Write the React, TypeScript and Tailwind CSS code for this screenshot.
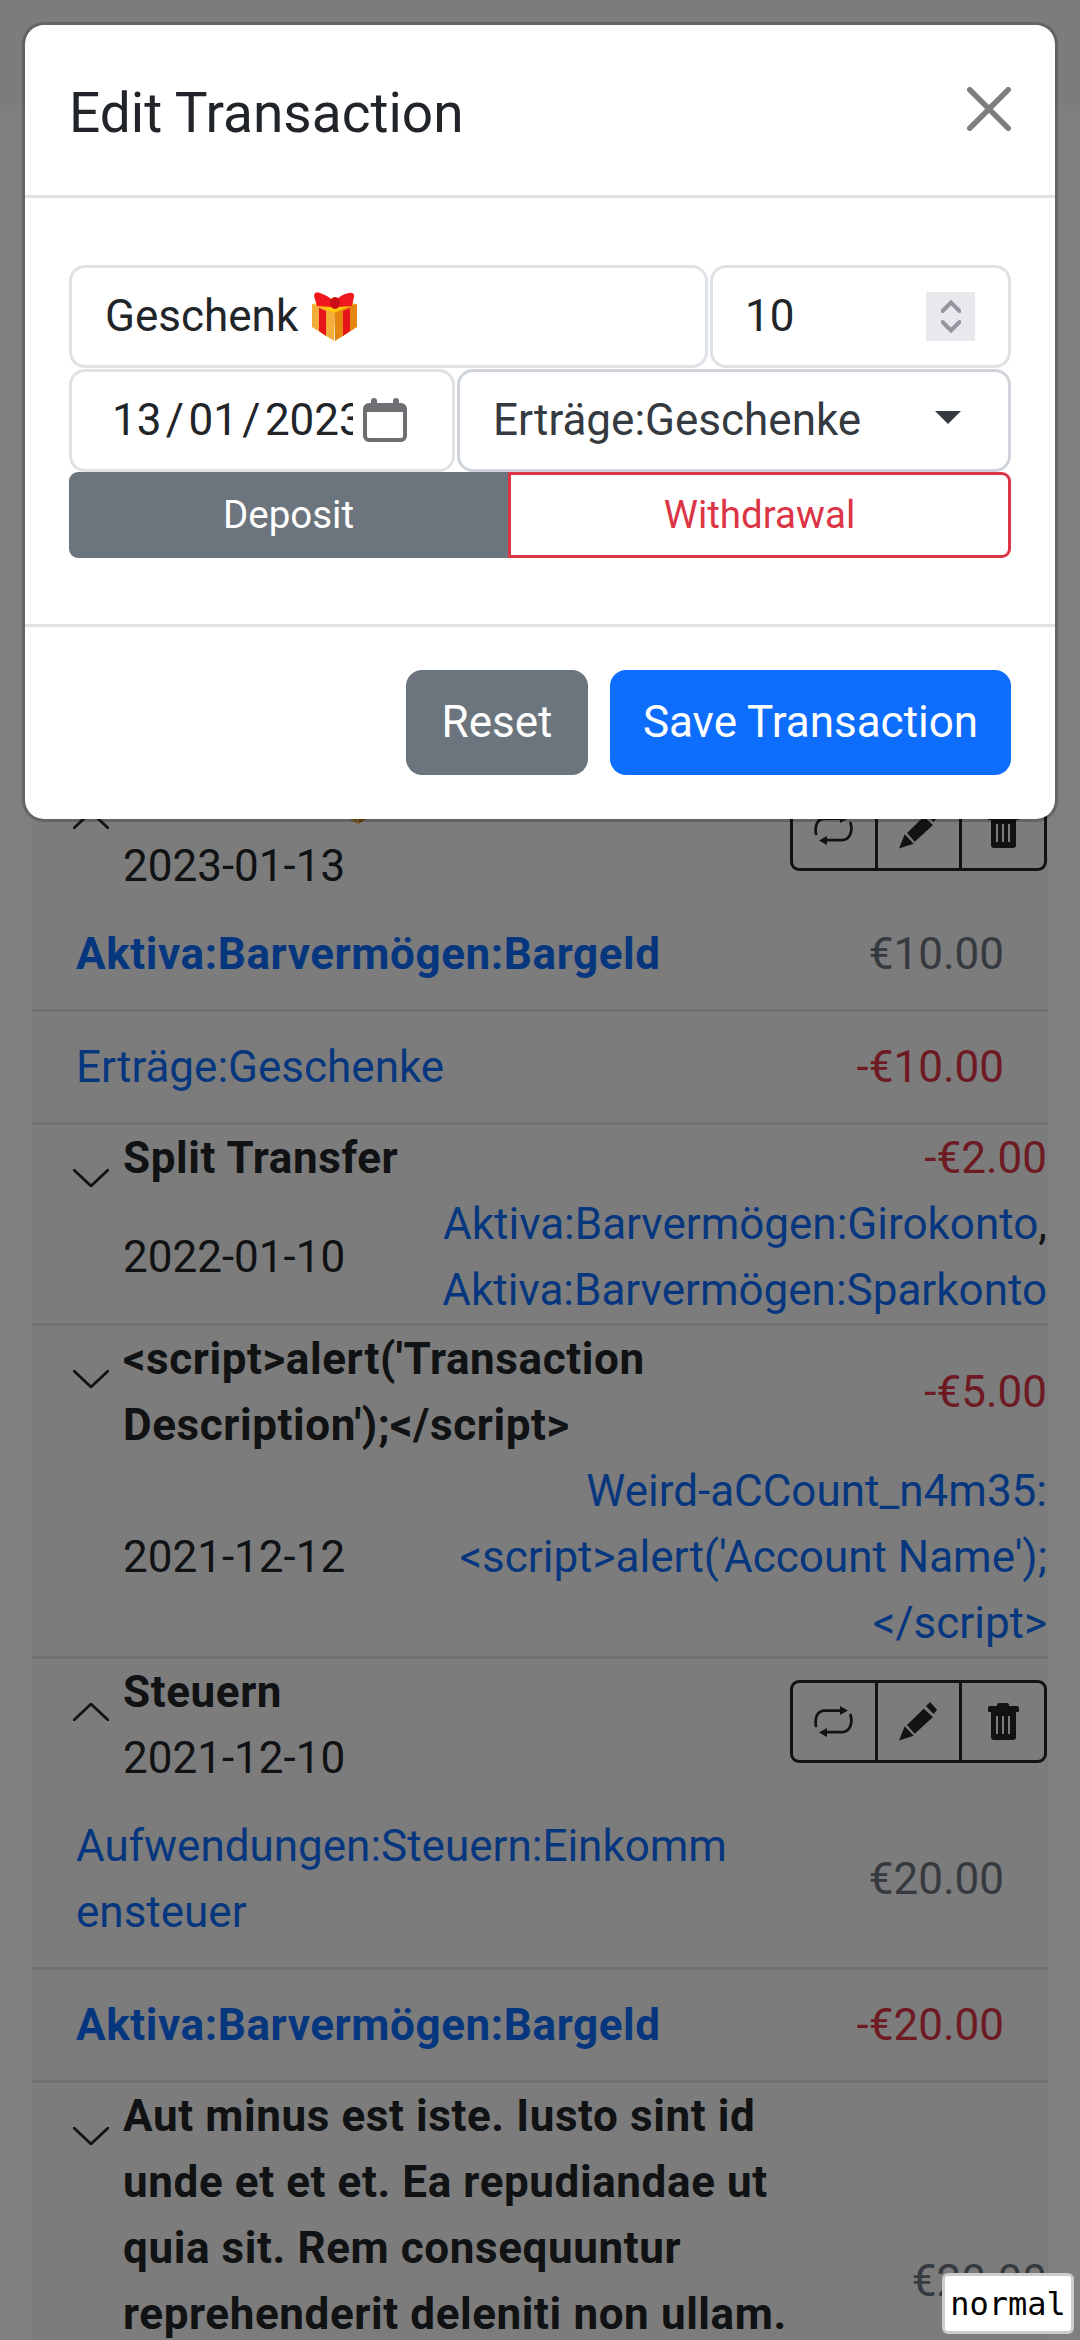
function Gift({ className }: { className: string }) {
  return (
    <svg viewBox="0 0 45 49" className={className}>
      <path d="M22 14 0 12v23l22 14z" fill="#f5ae3a" />
      <path d="M22 14l23-2v23L23 49z" fill="#e5860f" />
      <path d="M2 12 23 5l20 7-21 9z" fill="#ffc80a" />
      <path d="M7 16l7 3v25l-7-5zM31 19l7-3v23l-7 5z" fill="#e8141c" />
      <path d="M5 14 2 4c0-3 3-5 6-3 6 2 11 5 14 9 3-4 9-8 15-9 3-1 6 1 5 4l-2 9-15 1-3-4-3 4z" fill="#f0181f" />
      <ellipse cx="23" cy="11" rx="5" ry="6" fill="#c90d16" />
    </svg>
  );
}

function Chevron({ up }: { up?: boolean }) {
  return (
    <svg viewBox="0 0 36 18" className="w-[36px] h-[18px] mt-[44px] ml-[41px] mr-[14px] shrink-0" fill="none" stroke="#212529" strokeWidth="2.75" strokeLinecap="round">
      <path d={up ? "M1 17 18 1l17 16" : "M1 1l17 16L35 1"} />
    </svg>
  );
}

function Actions() {
  return (
    <div className="flex h-[83px] w-[257px] shrink-0 mt-[21px] mr-[1px] rounded-[9px] border-[3px] border-[#212529] text-[#212529]">
      <div className="flex flex-1 items-center justify-center">
        <svg viewBox="0 0 39 32" className="w-[39px] h-[32px]" fill="none" stroke="currentColor" strokeWidth="2.75" strokeLinecap="round">
          <path d="M2 20C.5 12 3 4.5 11 4.5h16" />
          <path d="M36.5 9c2.5 8-.5 17-8.500 17H12" />
          <path d="M26 0l8 4.500-8 4.500zM13 22l-8 4.500 8 4.500z" fill="currentColor" stroke="none" />
        </svg>
      </div>
      <div className="flex flex-1 items-center justify-center border-x-[3px] border-[#212529]">
        <svg viewBox="0 0 39 39" className="w-[39px] h-[39px]" fill="currentColor">
          <path d="M27 4.300 31 0l7 7.700L34.700 12zM24.700 6.700 34 15 15.700 31.700 8 23zM5.700 24.300l9 9.400L0 38.500z" />
        </svg>
      </div>
      <div className="flex flex-1 items-center justify-center">
        <svg viewBox="0 0 32 37" className="w-[32px] h-[37px]" fill="currentColor" fillRule="evenodd">
          <path d="M12 0h8a2 2 0 012 2v1h8a2 2 0 012 2v3a1 1 0 01-1 1h-2v25a3 3 0 01-3 3H7a3 3 0 01-3-3V9H2a1 1 0 01-1-1V5a2 2 0 012-2h7V2a2 2 0 012-2zM9 13v18h2V13zm6 0v18h2V13zm6 0v18h2V13z" />
        </svg>
      </div>
    </div>
  );
}

function SubRow({ account, amount, bold, red }: { account: string; amount: string; bold?: boolean; red?: boolean }) {
  return (
    <div className="flex items-center justify-between px-[44px] py-[22px] border-b-[3px] border-[#dee2e6]">
      <a className={`w-[670px] break-all text-[#0d6efd] ${bold ? "font-bold tracking-[0.6px]" : ""}`}>{account}</a>
      <span className={red ? "text-[#dc3545]" : "text-[#6c757d]"}>{amount}</span>
    </div>
  );
}

function CollapsedRow({ title, date, amount, accounts, gray }: { title: string; date: string; amount: string; accounts: React.ReactNode; gray?: boolean }) {
  return (
    <div className="flex border-b-[3px] border-[#dee2e6]">
      <Chevron />
      <div className="flex-1 min-w-0">
        <div className="flex items-center justify-between">
          <div className="font-bold tracking-[0.6px] w-[690px]">{title}</div>
          <span className={gray ? "text-[#6c757d] pr-[1px]" : "text-[#dc3545] pr-[1px]"}>{amount}</span>
        </div>
        <div className="flex items-center justify-between">
          <div className="shrink-0">{date}</div>
          <div className="text-right pr-[1px]">{accounts}</div>
        </div>
      </div>
    </div>
  );
}

export default function App() {
  return (
    <div className="relative h-[2340px] w-[1080px] overflow-hidden bg-white font-['Roboto',sans-serif] text-[44px] leading-[66px] text-[#212529]">
      {/* page behind the dialog */}
      <div className="h-[105px] bg-[#f8f9fa]" />
      <div className="mx-[32px] mt-[662px] bg-[#f8f8f8]">
        <div className="flex">
          <Chevron up />
          <div className="flex-1">
            <div className="font-bold tracking-[0.6px] flex items-center gap-[12px]">Geschenk <Gift className="w-[44px] h-[48px]" /></div>
            <div>2023-01-13</div>
          </div>
          <Actions />
        </div>
        <SubRow account="Aktiva:Barvermögen:Bargeld" amount="€10.00" bold />
        <SubRow account="Erträge:Geschenke" amount="-€10.00" red />
        <CollapsedRow
          title="Split Transfer"
          date="2022-01-10"
          amount="-€2.00"
          accounts={
            <>
              <a className="text-[#0d6efd]">Aktiva:Barvermögen:Girokonto</a>,<br />
              <a className="text-[#0d6efd]">Aktiva:Barvermögen:Sparkonto</a>
            </>
          }
        />
        <CollapsedRow
          title="<script>alert('Transaction Description');</script>"
          date="2021-12-12"
          amount="-€5.00"
          accounts={
            <a className="text-[#0d6efd]">
              Weird-aCCount_n4m35:<br />&lt;script&gt;alert('Account Name');<br />&lt;/script&gt;
            </a>
          }
        />
        <div className="flex">
          <Chevron up />
          <div className="flex-1">
            <div className="font-bold tracking-[0.6px]">Steuern</div>
            <div>2021-12-10</div>
          </div>
          <Actions />
        </div>
        <SubRow account="Aufwendungen:Steuern:Einkommensteuer" amount="€20.00" />
        <SubRow account="Aktiva:Barvermögen:Bargeld" amount="-€20.00" bold red />
        <CollapsedRow
          title="Aut minus est iste. Iusto sint id unde et et et. Ea repudiandae ut quia sit. Rem consequuntur reprehenderit deleniti non ullam. Quia voluptatem sed et ipsa dolores ut vero."
          date="2021-12-01"
          amount="€20.00"
          accounts={null}
          gray
        />
      </div>

      <div className="absolute inset-0 bg-black/50" />

      {/* dialog */}
      <div className="absolute left-[22px] top-[22px] w-[1036px] rounded-[22px] border-[3px] border-black/20 bg-clip-padding bg-white">
        <div className="flex items-center justify-between px-[44px] pt-[44px] pb-[43px] border-b-[3px] border-[#dee2e6]">
          <h5 className="pt-[6px] text-[55px] leading-[76.5px]">Edit Transaction</h5>
          <svg viewBox="0 0 16 16" className="w-[44px] h-[44px] -mt-[2px] opacity-50">
            <path d="M.293.293a1 1 0 011.414 0L8 6.586 14.293.293a1 1 0 111.414 1.414L9.414 8l6.293 6.293a1 1 0 01-1.414 1.414L8 9.414l-6.293 6.293a1 1 0 01-1.414-1.414L6.586 8 .293 1.707a1 1 0 010-1.414z" />
          </svg>
        </div>

        <div className="px-[44px] pt-[67px] pb-[66px] border-b-[3px] border-[#dee2e6]">
          <div className="flex gap-[2px]">
            <div className="flex h-[103px] w-[639px] items-center gap-[14px] rounded-[16px] border-[3px] border-[#dee2e6] pl-[33px]">
              Geschenk <Gift className="w-[45px] h-[49px]" />
            </div>
            <div className="flex h-[103px] flex-1 items-center justify-between rounded-[16px] border-[3px] border-[#dee2e6] pl-[32px] pr-[33px]">
              10
              <div className="flex h-[49px] w-[49px] items-center justify-center bg-[#e9e8ed]">
                <svg viewBox="0 0 20 33" className="w-[20px] h-[33px]" fill="none" stroke="#96949f" strokeWidth="4" strokeLinecap="round">
                  <path d="M1.500 11l8.500-8.500 8.500 8.500M1.500 22l8.500 8.500 8.500-8.500" />
                </svg>
              </div>
            </div>
          </div>
          <div className="flex gap-[2px] mt-[1px]">
            <div className="flex h-[103px] w-[386px] items-center rounded-[16px] border-[3px] border-[#dee2e6] pl-[40px]">
              <div className="w-[241px] shrink-0 overflow-hidden whitespace-nowrap [word-spacing:-6.5px]">13 / 01 / 2023</div>
              <svg viewBox="0 0 44 44" className="ml-[10px] w-[44px] h-[44px] shrink-0" fill="#6f6f73">
                <path d="M11 0a3 3 0 013 3v2h16V3a3 3 0 016 0v2h2a6 6 0 016 6v27a6 6 0 01-6 6H6a6 6 0 01-6-6V11a6 6 0 016-6h2V3a3 3 0 013-3zM4 14v24a2 2 0 002 2h32a2 2 0 002-2V14z" />
              </svg>
            </div>
            <div className="flex h-[103px] flex-1 items-center justify-between rounded-[16px] border-[3px] border-[#ced4da] pl-[33px] pr-[47px] text-[#343a40]">
              Erträge:Geschenke
              <svg viewBox="0 0 26 13" className="w-[26px] h-[13px] -mt-[6px]" fill="#343a40"><path d="M0 0h26L13 13z" /></svg>
            </div>
          </div>
          <div className="flex h-[86px] text-[38.5px] leading-[57.75px]">
            <div className="flex w-[439px] items-center justify-center rounded-l-[9px] bg-[#6c757d] text-white">Deposit</div>
            <div className="flex flex-1 items-center justify-center rounded-r-[9px] border-[3px] border-[#dc3545] text-[#dc3545]">Withdrawal</div>
          </div>
        </div>

        <div className="flex justify-end gap-[22px] px-[44px] pt-[43px] pb-[44px]">
          <div className="flex h-[105px] w-[182px] items-center justify-center rounded-[16px] bg-[#6c757d] text-white">Reset</div>
          <div className="flex h-[105px] w-[401px] items-center justify-center rounded-[16px] bg-[#0d6efd] text-white">Save Transaction</div>
        </div>
      </div>

      <div className="absolute left-[942px] top-[2273px] flex h-[61px] w-[132px] items-center justify-center rounded-[6px] border-[3px] border-[#cccccc] bg-white font-['DejaVu_Sans_Mono',monospace] text-[32px] text-black">
        normal
      </div>
    </div>
  );
}
